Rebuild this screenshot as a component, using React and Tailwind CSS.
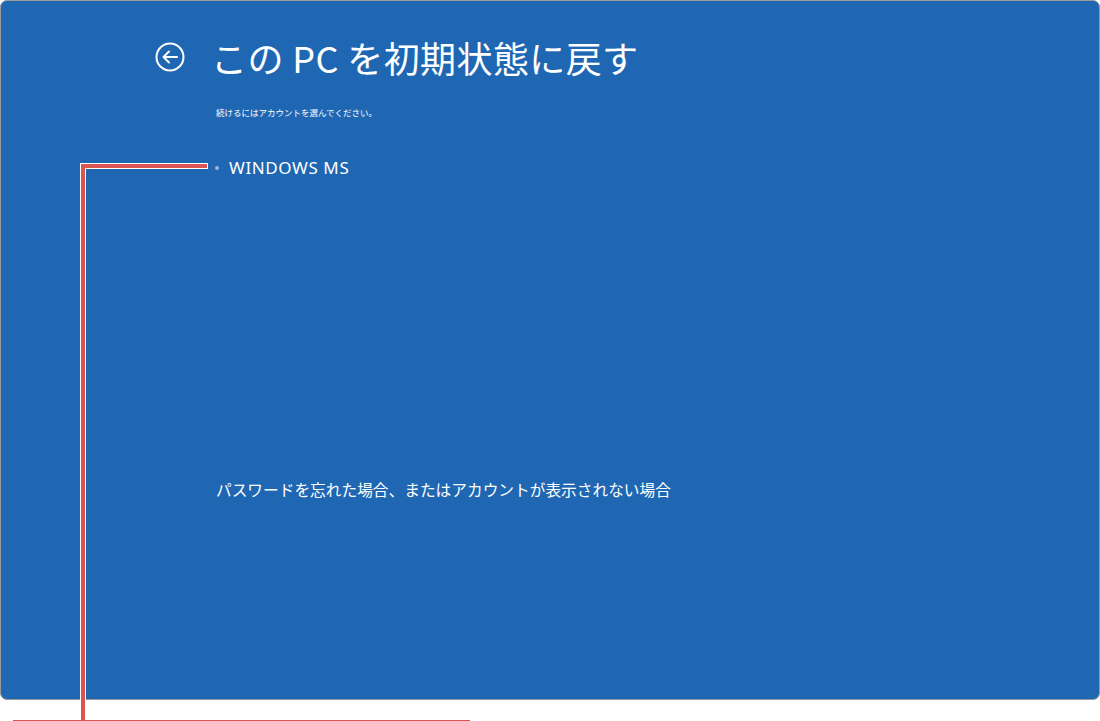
import React from "react";

const jp = { fontFamily: '"Noto Sans CJK JP", "Noto Sans", sans-serif' };

function BackIcon() {
  return (
    <svg width="32" height="32" viewBox="0 0 32 32" fill="none" stroke="white" strokeWidth="2">
      <circle cx="16" cy="16" r="13.5" />
      <path d="M23 16H10M15 10.5 9.5 16l5.5 5.5" strokeLinecap="round" strokeLinejoin="round" />
    </svg>
  );
}

export default function App() {
  return (
    <div className="relative h-[721px] w-[1100px] overflow-hidden bg-white" style={jp}>
      <div className="h-[700px] w-[1100px] rounded-[7px] border border-[#9a9a9a] bg-[#1f67b2] text-white">
        <div className="flex items-center gap-[25px] pl-[153px] pt-[33px]">
          <BackIcon />
          <h1 className="text-[36px] leading-[46px] tracking-[0.4px]">この PC を初期状態に戻す</h1>
        </div>
        <p className="pl-[215px] pt-[26px] text-[8.5px] leading-[12px]">続けるにはアカウントを選んでください。</p>
        <div className="flex items-center pl-[214px] pt-[40px]">
          <span className="h-[4px] w-[4px] rounded-full bg-[#9fb6d6]" />
          <span
            className="pl-[10px] text-[17px] leading-[20px] tracking-[0.6px]"
            style={{ fontFamily: '"Noto Sans", sans-serif' }}
          >
            WINDOWS MS
          </span>
        </div>
        <p className="pl-[215px] pt-[301px] text-[15.7px] leading-[22px]">
          パスワードを忘れた場合、またはアカウントが表示されない場合
        </p>
      </div>

      {/* annotation callout */}
      <div className="absolute left-[80px] top-[163px] h-[6px] w-[128px] border border-white bg-[#dc5450]" />
      <div className="absolute left-[80px] top-[163px] h-[560px] w-[6px] border border-white bg-[#dc5450]" />
      <div className="absolute left-[81px] top-[164px] h-[4px] w-[126px] bg-[#dc5450]" />
      <div className="absolute left-[13px] top-[720px] h-px w-[457px] bg-[#dc5450]" />
    </div>
  );
}
